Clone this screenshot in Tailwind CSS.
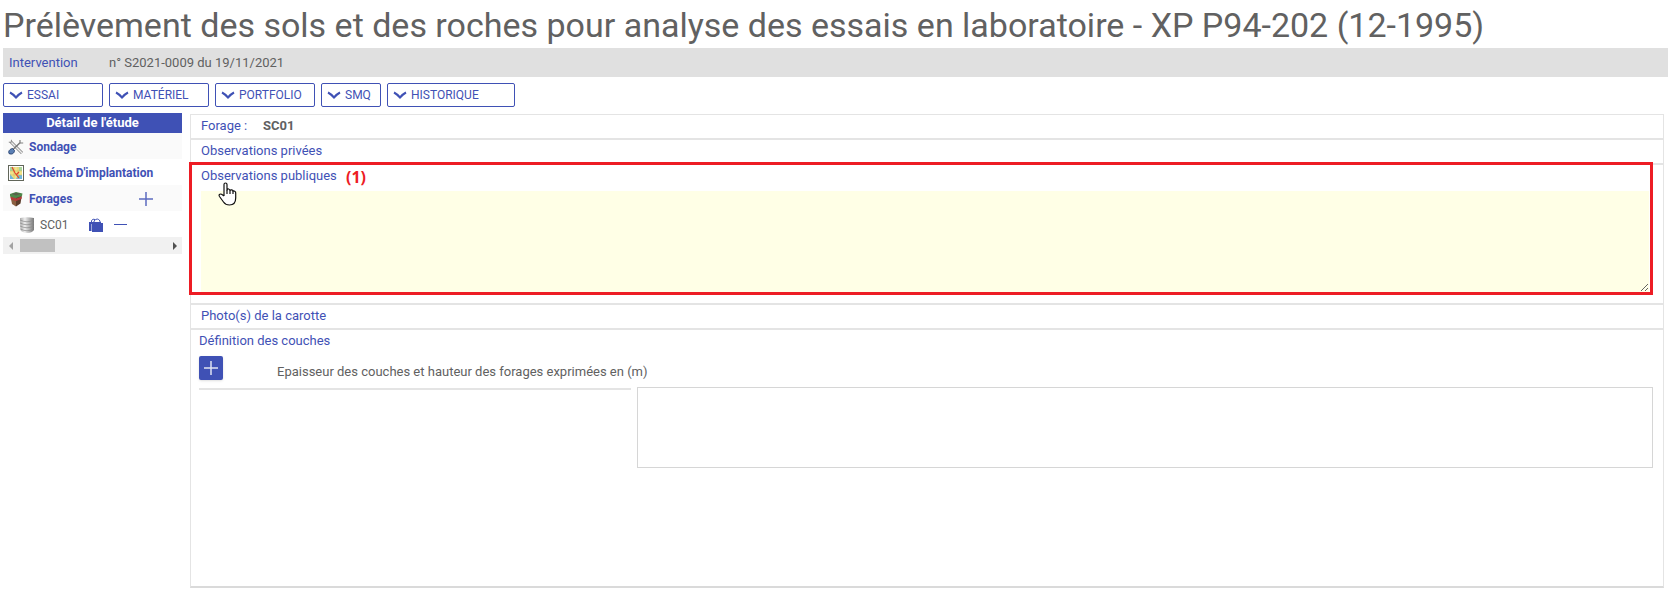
<!DOCTYPE html>
<html lang="fr">
<head>
    <meta charset="UTF-8">
    <meta name="viewport" content="width=device-width, initial-scale=1.0">
    <title>Prélèvement des sols et des roches</title>
    <script src="https://cdn.jsdelivr.net/npm/@tailwindcss/browser@4"></script>
</head>
<body class="bg-white text-[#616161] text-[13px] leading-5 font-['Roboto',sans-serif]">
    <div class="flex flex-col min-h-screen pl-[3px]">
        <h1 class="h-12 pt-[5px] text-[34px] leading-10 whitespace-nowrap">Prélèvement des sols et des roches pour analyse des essais en laboratoire - XP P94-202 (12-1995)</h1>

        <!-- Intervention -->
        <div class="flex items-center h-[29px] bg-[#e0e0e0] px-1.5">
            <a href="#" class="w-[100px] text-[#3f51b5]">Intervention</a>
            <span>n° S2021-0009 du 19/11/2021</span>
        </div>

        <!-- Menus -->
        <nav class="flex gap-1.5 mt-1.5 text-xs text-[#3f51b5]">
            <button class="flex items-center gap-1 w-[100px] h-6 px-[5px] border border-[#3f51b5] rounded-xs">
                <svg class="w-3.5 h-3.5" viewBox="0 0 14 14" fill="none" stroke="currentColor" stroke-width="2"><path d="M1 4.5Q4 6 7 9.5Q10 6 13 4.5"/></svg>
                ESSAI
            </button>
            <button class="flex items-center gap-1 w-[100px] h-6 px-[5px] border border-[#3f51b5] rounded-xs">
                <svg class="w-3.5 h-3.5" viewBox="0 0 14 14" fill="none" stroke="currentColor" stroke-width="2"><path d="M1 4.5Q4 6 7 9.5Q10 6 13 4.5"/></svg>
                MATÉRIEL
            </button>
            <button class="flex items-center gap-1 w-[100px] h-6 px-[5px] border border-[#3f51b5] rounded-xs">
                <svg class="w-3.5 h-3.5" viewBox="0 0 14 14" fill="none" stroke="currentColor" stroke-width="2"><path d="M1 4.5Q4 6 7 9.5Q10 6 13 4.5"/></svg>
                PORTFOLIO
            </button>
            <button class="flex items-center gap-1 w-[60px] h-6 px-[5px] border border-[#3f51b5] rounded-xs">
                <svg class="w-3.5 h-3.5" viewBox="0 0 14 14" fill="none" stroke="currentColor" stroke-width="2"><path d="M1 4.5Q4 6 7 9.5Q10 6 13 4.5"/></svg>
                SMQ
            </button>
            <button class="flex items-center gap-1 w-32 h-6 px-[5px] border border-[#3f51b5] rounded-xs">
                <svg class="w-3.5 h-3.5" viewBox="0 0 14 14" fill="none" stroke="currentColor" stroke-width="2"><path d="M1 4.5Q4 6 7 9.5Q10 6 13 4.5"/></svg>
                HISTORIQUE
            </button>
        </nav>

        <div class="flex grow gap-2 mt-1.5 pr-1 pb-px">
            <!-- Sidebar -->
            <aside class="w-[179px] shrink-0">
                <h2 class="h-5 bg-[#3f51b5] text-white text-center font-bold">Détail de l'étude</h2>
                <ul class="text-[#3f51b5] text-xs font-bold">
                    <li class="flex items-center gap-[5px] h-[26px] pl-[5px] pt-0.5 bg-[#fafafa]">
                        <svg class="w-4 h-4" viewBox="0 0 16 16" fill="none">
                            <path d="M3 3L14 14" stroke="#808080" stroke-width="3"/>
                            <path d="M3 3L14 14" stroke="#eee" stroke-width="1.5"/>
                            <path d="M.8 3.2L3.2 3.4L3.5 .8" stroke="#888"/>
                            <path d="M5 10.5L12 3.8" stroke="#777" stroke-width="1.5"/>
                            <path d="M12 1V4H15.2" stroke="#808080" stroke-width="1.2"/>
                            <path d="M1 14.5C0 12 2 10 4.5 9.5L6.5 11.5C6.5 14 4 16 1 14.5Z" fill="#5b80b5" stroke="#2c4674"/>
                        </svg>
                        <a href="#">Sondage</a>
                    </li>
                    <li class="flex items-center gap-[5px] h-[26px] pl-[5px] pt-0.5">
                        <svg class="w-4 h-4" viewBox="0 0 16 16" fill="none">
                            <rect x=".5" y=".5" width="15" height="15" fill="#fff" stroke="#62665a"/>
                            <rect x="2" y="2" width="12" height="12" fill="#f0e48a"/>
                            <path d="M2 2H5V6H2ZM11 2H14V6H11Z" fill="#a8d69a"/>
                            <path d="M2 9L6 14H2ZM10 10H14V14H8Z" fill="#6fb6dd"/>
                            <path d="M6 2V14M10 2V14M2 6H14M2 10H14" stroke="#c9b75b" stroke-width=".5"/>
                            <path d="M4 2L7 8L11 13M8 10L11 7" stroke="#e2442c" stroke-width="1.2"/>
                        </svg>
                        <a href="#">Schéma D'implantation</a>
                    </li>
                    <li class="flex items-center gap-[5px] h-[26px] pl-[5px] pt-0.5 bg-[#fafafa]">
                        <svg class="w-4 h-4" viewBox="0 0 16 16">
                            <path d="M2 3L8 5V15.5L4 13Z" fill="#8a5f40"/>
                            <path d="M14 3L8 5V15.5L12.5 12.5Z" fill="#5a3c2a"/>
                            <path d="M2 3L8 1L14.5 2.5L14 5L8 7L2.2 5.5Z" fill="#4e8a4a"/>
                            <path d="M3.5 3L8 1.8L13 2.8L8 4.5Z" fill="#59604a"/>
                            <path d="M2.5 6L8 7.5L13.8 5.5L13.5 8L8 10L3 8.5Z" fill="#b53a3a"/>
                        </svg>
                        <a href="#">Forages</a>
                        <button class="ml-auto mr-[29px]" aria-label="Ajouter un forage">
                            <svg class="w-3.5 h-3.5" viewBox="0 0 14 14" fill="none" stroke="#5c6bc0" stroke-width="1.5"><path d="M7 0V14M0 7H14"/></svg>
                        </button>
                    </li>
                    <li class="flex items-center h-[26px] pl-4 pt-px font-normal">
                        <svg class="w-4 h-4" viewBox="0 0 16 16">
                            <defs>
                                <linearGradient id="metal"><stop offset="0" stop-color="#aaa"/><stop offset=".35" stop-color="#eee"/><stop offset="1" stop-color="#777"/></linearGradient>
                            </defs>
                            <path d="M1 1Q8 -.5 15 1V13Q13 16 8 16Q3 15.5 1.5 13Z" fill="url(#metal)"/>
                            <path d="M1 3Q8 6.500 15 3M1 6Q8 9.500 15 6M1 9Q8 12.500 15 9M1.500 12Q8 15.500 14.500 12" fill="none" stroke="#8a8a8a" stroke-width=".7"/>
                        </svg>
                        <a href="#" class="w-12 ml-[5px] text-[#616161]">SC01</a>
                        <button class="ml-px" aria-label="Dupliquer">
                            <svg class="w-3.5 h-3.5" viewBox="0 0 14 14" fill="#3f51b5">
                                <path d="M0 4H2.5V13H0ZM3 5H14V14H3Z"/>
                                <path d="M2 4H12V6H2Z"/>
                                <path d="M2.5 4V2.5Q4 .5 6 1.5M5 5V3Q8.5 -1 11 3V5" fill="none" stroke="#3f51b5"/>
                            </svg>
                        </button>
                        <button class="ml-[11px]" aria-label="Supprimer">
                            <svg class="w-3.5 h-3.5" viewBox="0 0 14 14"><path d="M0 6.5H13" stroke="#3f51b5"/></svg>
                        </button>
                    </li>
                </ul>
                <!-- Horizontal scrollbar -->
                <div class="flex items-center h-[17px] pl-1.5 pr-[5px] bg-[#f1f1f1]">
                    <svg class="w-1 h-2" viewBox="0 0 4 8"><path d="M4 0V8L0 4Z" fill="#a3a3a3"/></svg>
                    <div class="w-[35px] h-[13px] ml-[7px] bg-[#c1c1c1]"></div>
                    <svg class="w-1 h-2 ml-auto" viewBox="0 0 4 8"><path d="M0 0V8L4 4Z" fill="#505050"/></svg>
                </div>
            </aside>

            <!-- Detail -->
            <main class="flex flex-col grow mt-px border border-b-2 border-[#e4e4e4] border-b-[#dadada] text-[#3f51b5]">
                <div class="flex items-start h-[25px] pl-2.5 pt-px border-b-2 border-[#e4e4e4]">
                    <span class="w-[62px]">Forage :</span>
                    <strong class="text-[#616161]">SC01</strong>
                </div>
                <div class="flex items-start h-[25px] pl-2.5 pt-px border-b-2 border-[#e4e4e4]">
                    <a href="#">Observations privées</a>
                </div>
                <section class="relative h-[140px] px-2.5 border-b-2 border-[#e4e4e4]">
                    <div class="flex items-start h-[26px] pt-px">
                        <label for="obs">Observations publiques</label>
                    </div>
                    <div class="pr-1">
                        <textarea id="obs" class="block w-full h-[101px] bg-[#ffffe6] outline-none resize"></textarea>
                    </div>
                    <!-- Callout -->
                    <div class="absolute -left-0.5 right-2.5 -top-[3px] h-[133px] border-[3px] border-[#ed1c24] pointer-events-none"></div>
                    <span class="absolute left-[155px] top-0 text-base leading-6 font-bold text-[#ed1c24] font-['Noto_Sans',sans-serif]">(1)</span>
                    <svg class="absolute left-[27px] top-[17px] w-[19px] h-6" viewBox="0 0 19 24" fill="#fff" stroke="#111" stroke-width="1.2" stroke-linejoin="round">
                        <path d="M6 14V2.5Q6 1 7.5 1T9 2.5V8Q9.3 6.8 10.6 7T12 8.5Q12.5 7.5 13.8 7.9T15 9.3Q15.5 8.7 16.7 9.2T17.7 11V16Q17.7 23 11.5 23Q7.5 23 5.5 20L1.5 14.5Q.5 13 1.8 12.3T4 12.5L6 14"/>
                        <path d="M9 8V12M12 8.5V12M15 9.3V12" fill="none"/>
                    </svg>
                </section>
                <div class="flex items-start h-[25px] pl-2.5 pt-px border-b-2 border-[#e4e4e4]">
                    <a href="#">Photo(s) de la carotte</a>
                </div>
                <section class="grow px-2">
                    <h3 class="h-[26px] pt-px">Définition des couches</h3>
                    <div class="flex text-[#616161]">
                        <button class="flex items-center justify-center w-6 h-6 bg-[#3f51b5] rounded-xs shadow" aria-label="Ajouter une couche">
                            <svg class="w-3.5 h-3.5" viewBox="0 0 14 14" fill="none" stroke="#dfe2f2" stroke-width="1.5"><path d="M7 0V14M0 7H14"/></svg>
                        </button>
                        <p class="ml-[54px] pt-1.5 -mb-0.5">Epaisseur des couches et hauteur des forages exprimées en (m)</p>
                    </div>
                    <div class="flex gap-1.5 mt-[7px] pr-0.5">
                        <div class="w-[432px] mt-px border-t-2 border-[#e4e4e4]"></div>
                        <div class="grow h-[81px] border border-[#d6d6d6]"></div>
                    </div>
                </section>
            </main>
        </div>
    </div>
</body>
</html>
